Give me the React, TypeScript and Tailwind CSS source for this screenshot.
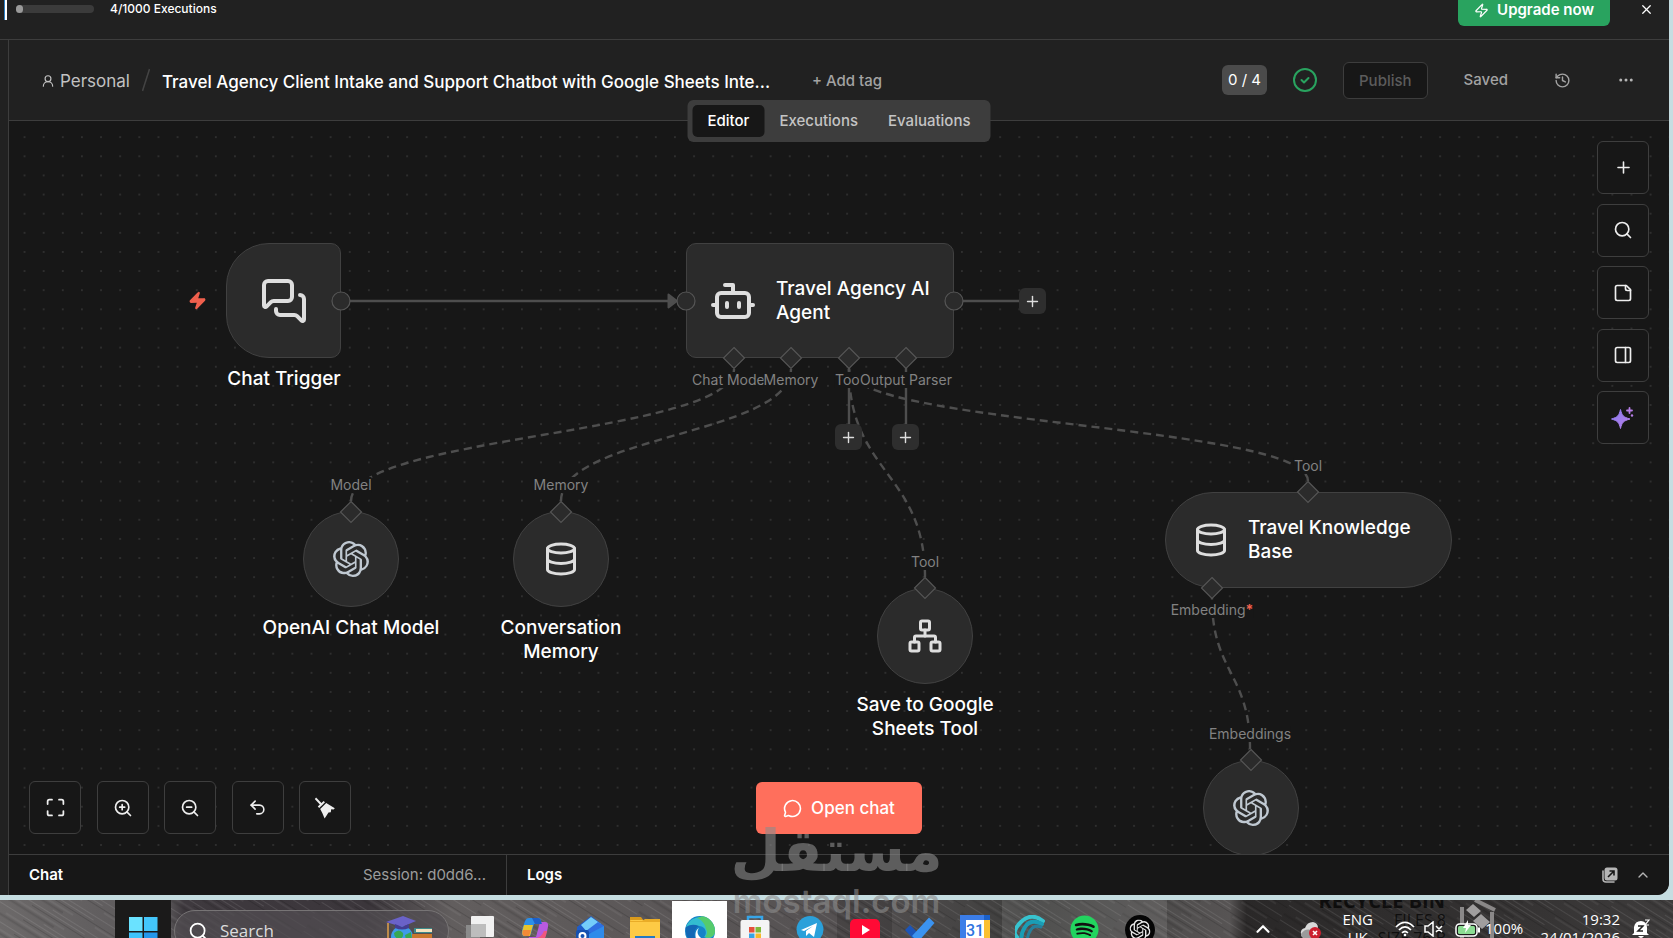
import type { ReactNode } from "react";
import {
  Bot,
  ChevronUp,
  Database,
  Ellipsis,
  History,
  Maximize,
  MessageCircle,
  MessagesSquare,
  Network,
  PanelRight,
  Plus,
  Search,
  Undo2,
  UserRound,
  X,
  Zap,
  ZoomIn,
  ZoomOut,
} from "lucide-react";
import { SiOpenai } from "react-icons/si";
import { FaSpotify } from "react-icons/fa";

const nodeBox = "absolute border border-[#414141] bg-[#2b2b2b] text-[#dedede]";
const nodeTitle = "absolute text-center text-[19px] leading-6 font-medium text-white";

function PortLabel({ className, children }: { className: string; children: ReactNode }) {
  return (
    <span
      className={`absolute -translate-x-1/2 whitespace-nowrap bg-[#171717] text-sm leading-4 text-[#828282] ${className}`}
    >
      {children}
    </span>
  );
}

function AddNodeButton({ className, label }: { className: string; label: string }) {
  return (
    <button
      type="button"
      aria-label={label}
      className={`absolute flex h-[26px] w-[27px] items-center justify-center rounded-md bg-[#2e2e2e] text-[#dedede] ${className}`}
    >
      <Plus size={17} strokeWidth={2} />
    </button>
  );
}

function SquareButton({ label, children }: { label: string; children: ReactNode }) {
  return (
    <button
      type="button"
      aria-label={label}
      className="flex h-[53px] w-[52px] shrink-0 items-center justify-center rounded-md border border-[#3e3e3e] bg-[#171717] text-[#eeeeee]"
    >
      {children}
    </button>
  );
}

function BroomIcon() {
  return (
    <svg width="22" height="22" viewBox="0 0 22 22" fill="currentColor" aria-hidden="true">
      <path d="M2.1 .6 8.6 7.2 7 8.8 .8 2.1Z" />
      <path d="M3.8 9.5 9.6 3.9 11 5.2 5.2 10.9Z" />
      <path d="M6.2 11.9 12.2 6.1 20.8 11.2 19.6 12.6 17.2 12.3 16.8 15.2 14.5 15.6 12.6 18.6 10.6 21.4 8.4 16.2Z" />
    </svg>
  );
}

function NoteIcon() {
  return (
    <svg
      width="20"
      height="20"
      viewBox="0 0 24 24"
      fill="none"
      stroke="currentColor"
      strokeWidth="2"
      strokeLinecap="round"
      strokeLinejoin="round"
      aria-hidden="true"
    >
      <path d="M16 3H5a2 2 0 0 0-2 2v14a2 2 0 0 0 2 2h14a2 2 0 0 0 2-2V8Z" />
      <path d="M15 3v4a2 2 0 0 0 2 2h4" />
    </svg>
  );
}

function SparkleIcon() {
  return (
    <svg width="24" height="24" viewBox="0 0 24 24" fill="none" aria-hidden="true">
      <defs>
        <linearGradient id="ai" x1="0" y1="0" x2="1" y2="1">
          <stop offset="0" stopColor="#8a7cf0" />
          <stop offset="1" stopColor="#b77ee8" />
        </linearGradient>
      </defs>
      <path d="M9.5 3.500C11 9.500 12 11 19 13 12 15 11 16.500 9.500 22.500 8 16.500 7 15 .5 13 7 11 8 9.500 9.500 3.500Z" fill="url(#ai)" stroke="url(#ai)" strokeLinejoin="round" />
      <path d="M18.500 2v5M16 4.500h5" stroke="#b77ee8" strokeWidth="1.800" strokeLinecap="round" />
      <circle cx="21" cy="9.500" r="1.200" fill="#b77ee8" />
    </svg>
  );
}

function Diamond({ x, y }: { x: number; y: number }) {
  return <path d={`M${x} ${y - 10.5}l10.5 10.5-10.5 10.5-10.5-10.5Z`} />;
}

function Banner() {
  return (
    <div className="flex h-10 shrink-0 items-start justify-between border-b border-[#3d3d3d] bg-[#212121]">
      <div className="flex items-start">
        <div className="ml-1 h-5 w-[3px] border-l border-[#2b7fc4] bg-white" />
        <div className="mt-[5px] ml-[9px] h-2 w-[78px] rounded-full bg-[#3b3b3b]">
          <div className="h-2 w-[7px] rounded-full bg-[#9a9a9a]" />
        </div>
        <span className="ml-4 text-xs leading-[18px] font-medium text-white">4/1000 Executions</span>
      </div>
      <div className="flex items-start">
        <button
          type="button"
          className="mr-[28px] flex h-[26px] items-center gap-2 rounded-b-md bg-[#29a35f] px-4 pb-1.5 text-[15px] leading-[18px] font-semibold text-white"
        >
          <Zap size={15} strokeWidth={2} />
          Upgrade now
        </button>
        <button type="button" aria-label="Dismiss" className="mr-[15px] flex h-[18px] w-4 items-center justify-center text-white">
          <X size={15} strokeWidth={2} />
        </button>
      </div>
    </div>
  );
}

function Header() {
  return (
    <header className="flex h-[81px] shrink-0 items-center border-b border-[#3d3d3d] bg-[#212121] pl-8">
      <a href="#personal" className="flex items-center gap-[5px] pt-px text-[17px] leading-6 text-[#c2c2c2]">
        <UserRound size={14} strokeWidth={2} />
        Personal
      </a>
      <svg width="8" height="24" viewBox="0 0 8 24" className="mx-3" aria-hidden="true">
        <path d="M7.5 1 .5 23" stroke="#444" strokeWidth="1.5" />
      </svg>
      <h1 className="w-[620px] truncate pt-[3px] text-[17px] leading-6 font-medium text-white">
        Travel Agency Client Intake and Support Chatbot with Google Sheets Inte...
      </h1>
      <button type="button" className="ml-[30px] pt-px text-[15px] leading-6 font-medium text-[#a3a3a3]">
        + Add tag
      </button>
      <div className="ml-auto flex items-center">
        <span className="rounded-md bg-[#4b4b4b] px-[6px] text-[15px] leading-[30px] text-white">0 / 4</span>
        <svg width="24" height="24" viewBox="0 0 24 24" fill="none" stroke="#29a35f" strokeWidth="2" className="ml-[26px]" aria-label="Ready">
          <circle cx="12" cy="12" r="11" />
          <path d="m8.5 12 2.500 2.500 4.500-4.500" strokeLinecap="round" strokeLinejoin="round" />
        </svg>
        <button
          type="button"
          disabled
          className="ml-[26px] rounded-md border border-[#3d3d3d] bg-[#171717] px-[15px] text-[15px] leading-[35px] font-medium text-[#5c5c5c]"
        >
          Publish
        </button>
        <span className="ml-9 text-[15px] leading-6 font-medium text-[#a3a3a3]">Saved</span>
        <button type="button" aria-label="History" className="ml-[46px] text-[#a3a3a3]">
          <History size={17} strokeWidth={2} />
        </button>
        <button type="button" aria-label="More" className="mr-[34px] ml-[46px] text-[#b5b5b5]">
          <Ellipsis size={18} strokeWidth={2} />
        </button>
      </div>
    </header>
  );
}

function ViewTabs() {
  return (
    <nav className="absolute -top-[21px] left-1/2 flex h-[42px] -translate-x-1/2 items-center rounded-md bg-[#3d3d3d] p-[5px] text-[15px] leading-8 font-medium text-[#c4c4c4]">
      <button type="button" className="rounded-[5px] bg-[#171717] px-[15px] text-white">
        Editor
      </button>
      <button type="button" className="px-[15px]">
        Executions
      </button>
      <button type="button" className="px-[15px]">
        Evaluations
      </button>
    </nav>
  );
}

function Canvas() {
  return (
    <main className="relative min-h-0 flex-1 bg-[#171717]">
      <div className="absolute inset-0 overflow-hidden">
        <svg className="absolute inset-0 h-full w-full" aria-hidden="true">
          <defs>
            <pattern id="dots" x="6" y="6.6" width="19.13" height="19.13" patternUnits="userSpaceOnUse">
              <circle cx="9.56" cy="9.56" r="0.75" fill="#4c4c4c" />
            </pattern>
          </defs>
          <rect width="100%" height="100%" fill="url(#dots)" />
          <g fill="none" stroke="#4e4e4e" strokeWidth="2.4">
            <path d="M332 180H662M945 180H1012M840 247V306M897 247V306" />
            <g strokeDasharray="8 5">
              <path d="M342 380C342 314 725 314 725 248" />
              <path d="M552 380C552 314 782 314 782 248" />
              <path d="M916 456C916 352 840 352 840 248" />
              <path d="M1299 360C1299 304 840 304 840 248" />
              <path d="M1241 628C1241 552 1203 552 1203 477" />
            </g>
          </g>
          <path d="M659.5 173.5 668 180l-8.500 6.500Z" fill="#4e4e4e" stroke="#4e4e4e" strokeWidth="2" strokeLinejoin="round" />
        </svg>

        <PortLabel className="top-[251px] left-[725px]">
          Chat Model<span className="font-bold text-[#f0604d]">*</span>
        </PortLabel>
        <PortLabel className="top-[251px] left-[782px]">Memory</PortLabel>
        <PortLabel className="top-[251px] left-[840px]">Tool</PortLabel>
        <PortLabel className="top-[251px] left-[897px]">Output Parser</PortLabel>
        <PortLabel className="top-[356px] left-[342px]">Model</PortLabel>
        <PortLabel className="top-[356px] left-[552px]">Memory</PortLabel>
        <PortLabel className="top-[433px] left-[916px]">Tool</PortLabel>
        <PortLabel className="top-[337px] left-[1299px]">Tool</PortLabel>
        <PortLabel className="top-[481px] left-[1203px]">
          Embedding<span className="font-bold text-[#f0604d]">*</span>
        </PortLabel>
        <PortLabel className="top-[605px] left-[1241px]">Embeddings</PortLabel>

        <Zap size={19} strokeWidth={2} className="absolute top-[170px] left-[179px] fill-[#f0604d] text-[#f0604d]" />
        <div className={`${nodeBox} top-[122px] left-[217px] flex h-[115px] w-[115px] items-center justify-center rounded-l-[43px] rounded-r-[10px]`}>
          <MessagesSquare size={48} strokeWidth={2} />
        </div>
        <h2 className={`${nodeTitle} top-[246px] left-[175px] w-[200px]`}>Chat Trigger</h2>

        <div className={`${nodeBox} top-[122px] left-[677px] flex h-[115px] w-[268px] items-center gap-[19px] rounded-[10px] pl-[22px]`}>
          <Bot size={48} strokeWidth={2} className="shrink-0" />
          <h2 className="text-[19px] leading-6 font-medium text-white">
            Travel Agency AI
            <br />
            Agent
          </h2>
        </div>
        <AddNodeButton label="Add next node" className="top-[167px] left-[1010px]" />
        <AddNodeButton label="Add tool" className="top-[303px] left-[826px]" />
        <AddNodeButton label="Add output parser" className="top-[303px] left-[883px]" />

        <div className={`${nodeBox} top-[390px] left-[294px] flex size-24 items-center justify-center rounded-full`}>
          <SiOpenai size={36} color="#bfc8d1" />
        </div>
        <h2 className={`${nodeTitle} top-[495px] left-[242px] w-[200px]`}>OpenAI Chat Model</h2>

        <div className={`${nodeBox} top-[390px] left-[504px] flex size-24 items-center justify-center rounded-full`}>
          <Database size={36} strokeWidth={2} />
        </div>
        <h2 className={`${nodeTitle} top-[495px] left-[482px] w-[140px]`}>Conversation Memory</h2>

        <div className={`${nodeBox} top-[467px] left-[868px] flex size-24 items-center justify-center rounded-full`}>
          <Network size={36} strokeWidth={2} />
        </div>
        <h2 className={`${nodeTitle} top-[572px] left-[841px] w-[150px]`}>Save to Google Sheets Tool</h2>

        <div className={`${nodeBox} top-[371px] left-[1156px] flex h-24 w-[287px] items-center gap-[19px] rounded-full pl-[27px]`}>
          <Database size={36} strokeWidth={2} className="shrink-0" />
          <h2 className="text-[19px] leading-6 font-medium text-white">
            Travel Knowledge
            <br />
            Base
          </h2>
        </div>

        <div className={`${nodeBox} top-[639px] left-[1194px] flex size-24 items-center justify-center rounded-full`}>
          <SiOpenai size={36} color="#bfc8d1" />
        </div>

        <svg className="pointer-events-none absolute inset-0 h-full w-full" fill="#2b2b2b" stroke="#555555" strokeWidth="1.2" aria-hidden="true">
          <circle cx="332" cy="180" r="9" />
          <circle cx="677" cy="180" r="9" />
          <circle cx="945" cy="180" r="9" />
          <Diamond x={725} y={237} />
          <Diamond x={782} y={237} />
          <Diamond x={840} y={237} />
          <Diamond x={897} y={237} />
          <Diamond x={342} y={391} />
          <Diamond x={552} y={391} />
          <Diamond x={916} y={467} />
          <Diamond x={1299} y={371} />
          <Diamond x={1203} y={467} />
          <Diamond x={1242} y={639} />
        </svg>
      </div>

      <ViewTabs />

      <div className="absolute top-5 right-5 flex h-[303px] flex-col justify-between">
        <SquareButton label="Add node">
          <Plus size={19} strokeWidth={2} />
        </SquareButton>
        <SquareButton label="Search nodes">
          <Search size={20} strokeWidth={2} />
        </SquareButton>
        <SquareButton label="Add note">
          <NoteIcon />
        </SquareButton>
        <SquareButton label="Toggle panel">
          <PanelRight size={20} strokeWidth={2} />
        </SquareButton>
        <SquareButton label="Assistant">
          <SparkleIcon />
        </SquareButton>
      </div>

      <div className="absolute bottom-5 left-5 flex w-[322px] justify-between">
        <SquareButton label="Fit view">
          <Maximize size={21} strokeWidth={2} />
        </SquareButton>
        <SquareButton label="Zoom in">
          <ZoomIn size={20} strokeWidth={2} />
        </SquareButton>
        <SquareButton label="Zoom out">
          <ZoomOut size={20} strokeWidth={2} />
        </SquareButton>
        <SquareButton label="Undo">
          <Undo2 size={19} strokeWidth={2} />
        </SquareButton>
        <SquareButton label="Tidy up">
          <BroomIcon />
        </SquareButton>
      </div>

      <button
        type="button"
        className="absolute bottom-5 left-1/2 flex h-[52px] w-[166px] -translate-x-1/2 items-center justify-center gap-[9px] rounded-md bg-[#ff6f5c] text-[17px] leading-6 font-medium text-white"
      >
        <MessageCircle size={19} strokeWidth={2} />
        Open chat
      </button>
    </main>
  );
}

function LogsBar() {
  return (
    <footer className="flex h-[41px] shrink-0 items-stretch rounded-br-xl border-t border-[#3d3d3d] bg-[#171717] text-[15px] leading-[40px]">
      <div className="flex w-[498px] items-center justify-between border-r border-[#3d3d3d] px-5">
        <span className="font-semibold text-white">Chat</span>
        <span className="text-[#9c9c9c]">Session: d0dd6...</span>
      </div>
      <div className="flex flex-1 items-center gap-[17px] pr-[18px] pl-5">
        <span className="mr-auto font-semibold text-white">Logs</span>
        <button type="button" aria-label="Pop out" className="text-[#b5b5b5]">
          <svg width="16" height="16" viewBox="0 0 16 16" fill="none" aria-hidden="true">
            <path d="M1 4v8a3 3 0 0 0 3 3h8" stroke="currentColor" strokeWidth="1.600" strokeLinecap="round" />
            <rect x="2.500" y="0.500" width="13" height="13" rx="2.500" fill="currentColor" />
            <path d="m6 10 6-6M7.500 4H12v4.500" stroke="#171717" strokeWidth="1.600" />
          </svg>
        </button>
        <button type="button" aria-label="Expand" className="text-[#b5b5b5]">
          <ChevronUp size={16} strokeWidth={2} />
        </button>
      </div>
    </footer>
  );
}

function TaskIcon({ label, className = "", children }: { label: string; className?: string; children: ReactNode }) {
  return (
    <button type="button" aria-label={label} className={`flex h-12 w-[55px] shrink-0 justify-center pt-[15px] ${className}`}>
      <svg width="30" height="30" viewBox="0 0 30 30" aria-hidden="true">
        {children}
      </svg>
    </button>
  );
}

function Taskbar() {
  return (
    <div className="relative h-[38px] shrink-0 overflow-hidden bg-[#5e5a5a]">
      <svg className="absolute inset-0 h-full w-full" aria-hidden="true">
        <defs>
          <linearGradient id="desk" x1="0" x2="1" y1="0" y2="0">
            <stop offset="0" stopColor="#6c6969" />
            <stop offset="0.1" stopColor="#5a5759" />
            <stop offset="0.11" stopColor="#3e393e" />
            <stop offset="0.22" stopColor="#3b363b" />
            <stop offset="0.27" stopColor="#625e5e" />
            <stop offset="0.5" stopColor="#555152" />
            <stop offset="0.62" stopColor="#3d3d3c" />
            <stop offset="0.735" stopColor="#575454" />
            <stop offset="0.745" stopColor="#2a2828" />
            <stop offset="0.9" stopColor="#343232" />
            <stop offset="1" stopColor="#3e3c3c" />
          </linearGradient>
          <pattern id="grain" width="137" height="17" patternUnits="userSpaceOnUse" patternTransform="rotate(32)">
            <path d="M0 1.500H90" stroke="#fff" strokeOpacity="0.1" />
            <path d="M30 4.500H137" stroke="#000" strokeOpacity="0.15" />
            <path d="M12 8H70M95 7H125" stroke="#fff" strokeOpacity="0.07" strokeWidth="1.500" />
            <path d="M0 11.500H60" stroke="#000" strokeOpacity="0.12" strokeWidth="2" />
            <path d="M50 14.500H137" stroke="#fff" strokeOpacity="0.09" />
          </pattern>
        </defs>
        <rect width="100%" height="100%" fill="url(#desk)" />
        <rect width="100%" height="100%" fill="url(#grain)" />
      </svg>
      <div className="absolute top-0 right-[173px] w-[190px] text-right font-['Open_Sans',sans-serif] text-xl leading-5 text-black/70" aria-hidden="true">
        <div className="-mt-[9px] pr-[55px] font-bold whitespace-nowrap">RECYCLE BIN</div>
        <div className="pr-[54px] text-base leading-[18px]">FILES 8</div>
        <div className="pr-[54px] text-base leading-[18px]">SIZE 76 B</div>
      </div>
      <svg className="absolute top-0 right-[172px]" width="42" height="38" viewBox="0 0 42 38" fill="none" aria-hidden="true">
        <path d="M3 7v31M33 12v26M16 0l20 10" stroke="#8a8888" strokeWidth="4" />
        <path d="m14 4 8 7-7 6-8-7ZM22 14l9 8-8 7-9-8Z" fill="#a09e9e" />
      </svg>

      <div className="relative flex h-12 items-stretch">
        <button type="button" aria-label="Start" className="ml-[115px] flex w-14 shrink-0 justify-center bg-[#1b1a1a] pt-4">
          <svg width="30" height="30" viewBox="0 0 30 30" aria-hidden="true">
            <path d="M1 1h13.500v14H1z" fill="#6ae2ff" />
            <path d="M16 1h13.500v14H16z" fill="#43c6fb" />
            <path d="M1 16.500h13.500V30H1z" fill="#3fc3fb" />
            <path d="M16 16.500h13.500V30H16z" fill="#2497ec" />
          </svg>
        </button>
        <label className="mt-[10px] ml-[3px] flex h-[42px] w-[275px] shrink-0 items-center gap-[11px] rounded-full border border-[#777475] bg-[#534f52]/70 pl-[13px] text-white">
          <Search size={21} strokeWidth={2} className="shrink-0" />
          <input
            type="text"
            placeholder="Search"
            aria-label="Search"
            className="w-[150px] bg-transparent font-['Open_Sans',sans-serif] text-[17px] leading-6 text-white outline-none placeholder:text-[#dcdcdc]"
          />
          <svg width="50" height="34" viewBox="0 0 50 34" className="mt-1 mr-[13px] ml-auto shrink-0 self-start" aria-hidden="true">
            <circle cx="17" cy="22" r="11" fill="#3f9be8" />
            <path d="M9 18q5-5 9 0 1 5-4 6-5-1-5-6ZM20 20l6-3 1 8-5 4Z" fill="#37a852" />
            <path d="m1 7 17-6 13 5-14 6Z" fill="#6a62c8" />
            <path d="M10 9v4q7 3 14 0V9l-7 3Z" fill="#443d92" />
            <path d="M3 8v18" stroke="#e0a04a" strokeWidth="1.500" />
            <path d="M29 13h18v5H29z" fill="#3d8a8a" />
            <path d="M31 14h16v3H31z" fill="#f5e3c0" />
            <path d="M27 19h20v5H27z" fill="#c8772e" />
            <path d="M29 25h20v5H29z" fill="#e2b04e" />
          </svg>
        </label>
        <div className="ml-[3px] flex shrink-0">
          <TaskIcon label="Task view">
            <rect x="1" y="10" width="14" height="18" fill="#8a8a8a" />
            <rect x="6" y="1" width="23" height="21" rx="1" fill="#f1f1f1" />
            <rect x="6" y="9" width="15" height="13" fill="#bdbdbd" />
          </TaskIcon>
          <TaskIcon label="Copilot">
            <path d="M9 3h9c3 0 3 3 4 6h-8l-4 12H5C0 21 2 15 4 9c1-3 2-6 5-6Z" fill="#2b8fe8" />
            <path d="M4 10h9l-3 11H5c-4 0-3-5-1-11Z" fill="#e6c52d" />
            <path d="M3 15h8l-2 6H5c-3 0-3-3-2-6Z" fill="#f28a37" />
            <path d="M20 7h5c5 0 3 6 1 12-1 4-3 8-6 8h-9c-3 0-3-3-2-5h7Z" fill="#b85ae0" />
            <path d="M24 16h3c-1 6-3 11-7 11h-9l-2-4h7q5 0 8-7Z" fill="#f0567e" />
            <path d="M9 3h9c3 0 3 4 4 6h-7l-3-6Z" fill="#1d5fc9" />
          </TaskIcon>
          <TaskIcon label="Outlook">
            <path d="M2 12 16 1l13 10v19H2Z" fill="#1e5cc8" />
            <path d="m6 10 10-8 10 7-13 9Z" fill="#74cdfa" />
            <path d="m11 16 12-9 6 4v12Z" fill="#2f6fe0" />
            <path d="M12 20 29 11v19H12Z" fill="#2f8bea" />
            <rect x="1" y="15" width="13" height="14" rx="2" fill="#1550b0" />
            <circle cx="7.500" cy="21" r="3" fill="none" stroke="#fff" strokeWidth="2" />
          </TaskIcon>
          <TaskIcon label="File Explorer">
            <path d="M0 2h11l3 4H0Z" fill="#d99a1c" />
            <rect y="5" width="30" height="25" rx="1" fill="#fdca45" />
            <path d="M0 6h12l3-2h15v3H0Z" fill="#e9ac27" />
            <path d="M5 21h20v9H5z" fill="#2379c4" />
          </TaskIcon>
          <TaskIcon label="Edge" className="mt-px bg-white">
            <circle cx="15" cy="15" r="15" fill="#1583c8" />
            <path d="M1 11A15 15 0 0 1 30 15c0 6-6 9-11 6 3-3 3-10-5-11-6 0-10 2-13 5Z" fill="#33bdd0" />
            <path d="M17 .2A15 15 0 0 1 30 15c0 6-6 8-10 6 2-2 3-5 1-8-1-5-4-9-9-11Z" fill="#55cb6c" />
            <path d="M1 11q6-4 13-1-6 3-4 12 2 5 6 7A15 15 0 0 1 1 11Z" fill="#1367b5" />
            <path d="M14 12q-3 4 0 8 3 4 10 4-8 6-13-1-2-8 3-11Z" fill="#fff" />
          </TaskIcon>
          <TaskIcon label="Store">
            <path d="M8 7V2h14v5" fill="none" stroke="#37a5e8" strokeWidth="2.500" />
            <rect x="0.500" y="5" width="29" height="25" rx="2" fill="#f4f4f4" />
            <path d="M9 12h5.500v5.500H9z" fill="#e5503c" />
            <path d="M15.500 12H21v5.500h-5.500z" fill="#7fb83a" />
            <path d="M9 18.500h5.500V24H9z" fill="#35a4e6" />
            <path d="M15.500 18.500H21V24h-5.500z" fill="#f6b92b" />
          </TaskIcon>
          <TaskIcon label="Telegram">
            <circle cx="15" cy="14.500" r="13.500" fill="#2aa0da" />
            <path d="m6 15 16-7-3 14-5-4-3 3v-5l7-5-9 5Z" fill="#fff" />
          </TaskIcon>
          <TaskIcon label="YouTube" className="bg-black/15">
            <rect y="4" width="30" height="24" rx="5" fill="#ff0a35" />
            <path d="m12 10 8 5-8 5Z" fill="#fff" />
          </TaskIcon>
          <TaskIcon label="To Do">
            <path d="m0 15 5-5 11 11-5 6Z" fill="#1c55b8" />
            <path d="M24 2.500 29.500 8 13 27l-6-6Z" fill="#3b93f0" />
          </TaskIcon>
          <TaskIcon label="Calendar">
            <path d="M0 0h30v30H0z" fill="#3b7de8" />
            <path d="M24 5h6v25h-6z" fill="#fbc02f" />
            <path d="M24 0h6v5h-6z" fill="#1b60c8" />
            <path d="M6 5h18v25H6z" fill="#fff" />
            <text x="15" y="21" textAnchor="middle" fontFamily="Roboto, sans-serif" fontSize="16" fontWeight="500" fill="#2e74df">
              31
            </text>
          </TaskIcon>
          <TaskIcon label="Crystal" className="bg-white/10">
            <g fill="none" strokeLinecap="round">
              <path d="M28 6Q16-3 6 7T2 22" stroke="#37c3cf" strokeWidth="4" />
              <path d="M27 9Q16 3 10 12T8 30" stroke="#1a9db5" strokeWidth="4" />
              <path d="M26 12q-7-3-11 4t-2 14" stroke="#25809c" strokeWidth="3" />
            </g>
          </TaskIcon>
          <TaskIcon label="Spotify" className="bg-white/10">
            <circle cx="15" cy="15" r="12" fill="#111" />
            <FaSpotify size={29} color="#22d45f" />
          </TaskIcon>
          <TaskIcon label="ChatGPT" className="bg-white/10">
            <circle cx="15" cy="15" r="15" fill="#050505" />
            <SiOpenai size={21} x={4.5} y={4.5} color="#e8e8e8" />
          </TaskIcon>
        </div>
        <div className="ml-auto flex shrink-0 items-start font-['Open_Sans',sans-serif] text-[15px] leading-[18px] text-white">
          <button type="button" aria-label="Hidden icons" className="mt-[18px] mr-[26px]">
            <ChevronUp size={22} strokeWidth={2.4} />
          </button>
          <svg width="22" height="24" viewBox="0 0 22 24" className="mt-5 mr-5" aria-hidden="true">
            <path d="M1 14Q0 9 5 8q2-6 8-6 5 1 5 6v10H4q-3-1-3-4Z" fill="#d8d8d8" />
            <path d="M1 14q5-7 12-3v7H4q-3-1-3-4Z" fill="#9b9b9b" />
            <circle cx="15" cy="13" r="6" fill="#cc1f2f" />
            <path d="m13 11 4 4m0-4-4 4" stroke="#fff" strokeWidth="1.600" />
          </svg>
          <span className="mt-[10px] mr-[22px] text-center">
            ENG
            <br />
            UK
          </span>
          <svg width="20" height="16" viewBox="0 0 20 16" fill="none" stroke="#fff" strokeWidth="1.700" className="mt-[21px] mr-[9px]" aria-hidden="true">
            <path d="M1 6q9-9 18 0M4 9q6-6 12 0M7 12q3-3 6 0" />
            <circle cx="10" cy="14" r="1.300" fill="#fff" stroke="none" />
          </svg>
          <svg width="20" height="16" viewBox="0 0 20 16" fill="none" stroke="#fff" strokeWidth="1.500" className="mt-[21px] mr-[11px]" aria-hidden="true">
            <path d="M1 5h3l5-4v14l-5-4H1ZM12 5l6 6m0-6-6 6" />
          </svg>
          <svg width="26" height="18" viewBox="0 0 26 18" className="mt-5 mr-1" aria-hidden="true">
            <rect x="1" y="4" width="21" height="12" rx="3.500" fill="#1c1c1c" stroke="#fff" strokeWidth="1.500" />
            <rect x="3" y="6" width="17" height="8" rx="1.500" fill="#8bdc92" />
            <path d="M24 7.500v5" stroke="#fff" strokeWidth="2" />
            <path d="M13 0 8 8h3l-1 5 6-8h-3Z" fill="#fff" />
          </svg>
          <span className="mt-[19px] w-[37px]">100%</span>
          <span className="mt-[10px] w-[98px] text-right">
            19:32
            <br />
            24/01/2026
          </span>
          <svg width="18" height="20" viewBox="0 0 18 20" className="mt-[19px] mr-[23px] ml-[12px]" aria-hidden="true">
            <path d="M2 14V8q1-6 7-6 5 0 6 6v6l2 2H0ZM6 17h6q-3 4-6 0Z" fill="#fff" />
            <path d="M6 7h5l-5 5h5" stroke="#222" strokeWidth="1.500" fill="none" />
            <path d="M13 1h4l-4 5h4" stroke="#fff" strokeWidth="1.200" fill="none" />
          </svg>
        </div>
      </div>
    </div>
  );
}

function Watermark() {
  return (
    <div className="pointer-events-none absolute bottom-[17px] left-[736px] flex w-[201px] flex-col items-center text-[#8c8c8c]/60" aria-hidden="true">
      <span lang="ar" dir="rtl" className="font-['DejaVu_Sans',sans-serif] text-[58px] leading-[60px] font-bold">
        مستقل
      </span>
      <span className="text-[33px] leading-10 font-semibold">mostaql.com</span>
    </div>
  );
}

export default function App() {
  return (
    <div className="relative flex h-screen flex-col overflow-hidden bg-[#c5dde1] font-['Inter',sans-serif]">
      <div className="mr-1 mb-[5px] flex min-h-0 flex-1 flex-col overflow-hidden rounded-br-xl bg-[#171717]">
        <Banner />
        <div className="flex min-h-0 flex-1">
          <aside className="w-[9px] shrink-0 border-r border-[#3d3d3d] bg-[#212121]" />
          <div className="flex min-w-0 flex-1 flex-col">
            <Header />
            <Canvas />
            <LogsBar />
          </div>
        </div>
      </div>
      <Taskbar />
      <Watermark />
    </div>
  );
}
